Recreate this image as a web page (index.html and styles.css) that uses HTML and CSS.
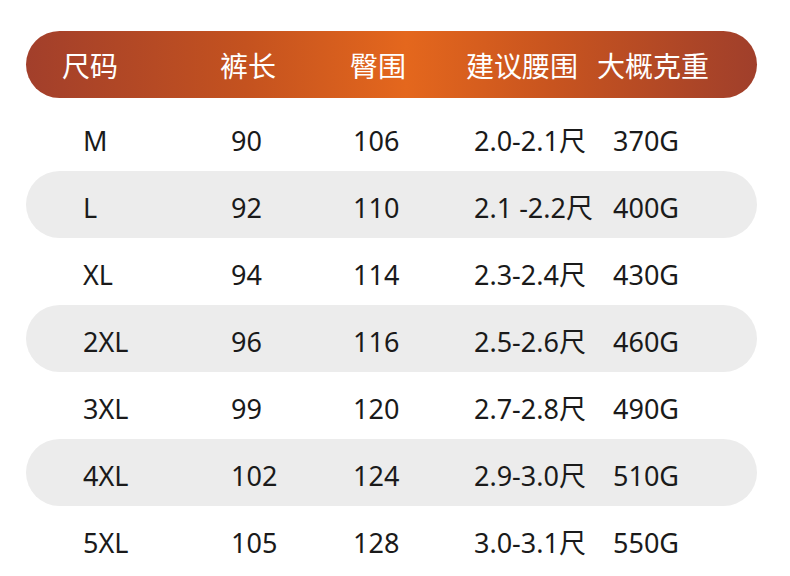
FILE: index.html
```html
<!DOCTYPE html>
<html lang="zh">
<head>
<meta charset="utf-8">
<link rel="stylesheet" href="styles.css">
</head>
<body>
<div class="table">
  <div class="head">
    <span>尺码</span><span>裤长</span><span>臀围</span><span>建议腰围</span><span>大概克重</span>
  </div>
  <div class="row"><span>M</span><span>90</span><span>106</span><span>2.0-2.1尺</span><span>370G</span></div>
  <div class="row band"><span>L</span><span>92</span><span>110</span><span>2.1 -2.2尺</span><span>400G</span></div>
  <div class="row"><span>XL</span><span>94</span><span>114</span><span>2.3-2.4尺</span><span>430G</span></div>
  <div class="row band"><span>2XL</span><span>96</span><span>116</span><span>2.5-2.6尺</span><span>460G</span></div>
  <div class="row"><span>3XL</span><span>99</span><span>120</span><span>2.7-2.8尺</span><span>490G</span></div>
  <div class="row band"><span>4XL</span><span>102</span><span>124</span><span>2.9-3.0尺</span><span>510G</span></div>
  <div class="row"><span>5XL</span><span>105</span><span>128</span><span>3.0-3.1尺</span><span>550G</span></div>
</div>
</body>
</html>
```
FILE: styles.css
```css
html, body {
  margin: 0;
  padding: 0;
  background: #ffffff;
}
body {
  font-family: "Noto Sans", "Noto Sans CJK SC", sans-serif;
  overflow: hidden;
  height: 576px;
}
.table {
  width: 731px;
  margin-left: 26px;
  padding-top: 31px;
}
.head {
  height: 67px;
  border-radius: 34px;
  background: linear-gradient(90deg, #a23f2b 0%, #c4521f 30%, #e4671d 52%, #c8541f 72%, #a03f2b 100%);
  display: grid;
  grid-template-columns: 158px 130px 116px 131px auto;
  align-items: center;
  padding-left: 36px;
  color: #ffffff;
  font-family: "Noto Sans CJK SC", sans-serif;
  font-size: 28px;
  font-weight: 400;
  line-height: 1;
  margin-bottom: 6px;
}
.row {
  height: 67px;
  border-radius: 34px;
  display: grid;
  grid-template-columns: 148px 122px 121px 139px auto;
  align-items: center;
  padding-left: 57px;
  padding-top: 5px;
  box-sizing: border-box;
  color: #1a1a1a;
  font-size: 27px;
  font-weight: 400;
  line-height: 1;
}
.band {
  background: #ececec;
}
```
